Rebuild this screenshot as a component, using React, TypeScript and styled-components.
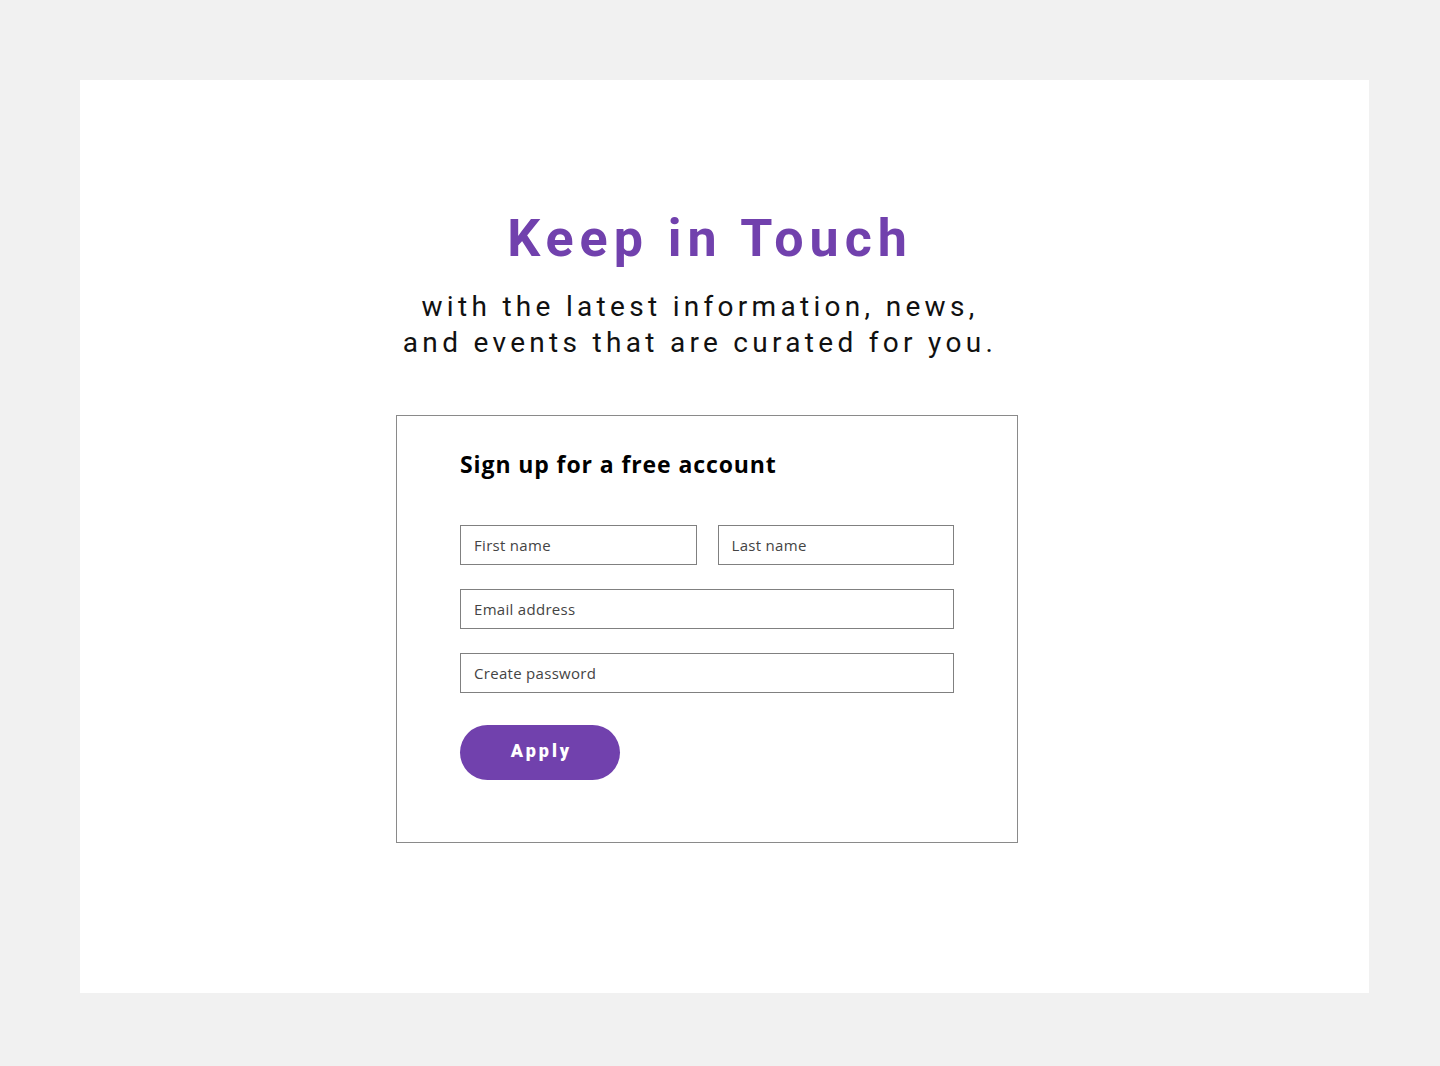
import styled, { createGlobalStyle } from "styled-components";

const GlobalStyle = createGlobalStyle`
  body {
    margin: 0;
    background: #f1f1f1;
  }
`;

const fields = {
  names: ["First name", "Last name"],
  rows: ["Email address", "Create password"],
};

const App = () => {
  return (
    <>
      <GlobalStyle />
      <Card>
        <Column>
          <Heading>Keep in Touch</Heading>
          <Subtitle>
            with the latest information, news,
            <br />
            and events that are curated for you.
          </Subtitle>
          <FormBox>
            <FormTitle>Sign up for a free account</FormTitle>
            <NameRow>
              {fields.names.map((name) => (
                <Field key={name} placeholder={name} />
              ))}
            </NameRow>
            {fields.rows.map((name) => (
              <Field key={name} placeholder={name} $spaced />
            ))}
            <ApplyButton type="button">Apply</ApplyButton>
          </FormBox>
        </Column>
      </Card>
    </>
  );
};

export default App;

const Card = styled.div`
  width: 1289px;
  height: 913px;
  margin: 80px 0 0 80px;
  background: #ffffff;
  box-sizing: border-box;
  padding: 133px 0 0 316px;
`;

const Column = styled.div`
  width: 622px;
  display: flex;
  flex-direction: column;
  align-items: center;
`;

const Heading = styled.h1`
  margin: 0 0 0 6px;
  font-family: Roboto, "Liberation Sans", sans-serif;
  font-weight: 700;
  font-size: 52px;
  line-height: 52px;
  letter-spacing: 6px;
  color: #7141ad;
`;

const Subtitle = styled.p`
  margin: 24px 0 0;
  width: 700px;
  padding-right: 14px;
  text-align: center;
  font-family: Roboto, "Liberation Sans", sans-serif;
  font-weight: 400;
  font-size: 28px;
  line-height: 36px;
  letter-spacing: 4.3px;
  color: #111111;
`;

const FormBox = styled.form`
  margin-top: 54px;
  width: 622px;
  height: 428px;
  box-sizing: border-box;
  border: 1px solid #8a8a8a;
  padding: 33px 63px 0;
  display: flex;
  flex-direction: column;
  align-items: flex-start;
`;

const FormTitle = styled.h2`
  margin: 0 0 46px;
  font-family: "Open Sans", "Liberation Sans", sans-serif;
  font-weight: 700;
  font-size: 23px;
  line-height: 30px;
  letter-spacing: 0.9px;
  color: #000000;
`;

const NameRow = styled.div`
  width: 100%;
  display: grid;
  grid-template-columns: 1fr 1fr;
  gap: 21px;
`;

const Field = styled.input<{ $spaced?: boolean }>`
  width: 100%;
  height: 40px;
  box-sizing: border-box;
  margin: ${(p) => (p.$spaced ? "24px 0 0" : "0")};
  padding: 0 13px;
  border: 1px solid #808080;
  border-radius: 0;
  outline: none;
  font-family: "Open Sans", "Liberation Sans", sans-serif;
  font-size: 15px;
  letter-spacing: 0.3px;
  color: #333333;

  &::placeholder {
    color: #444444;
  }
`;

const ApplyButton = styled.button`
  margin-top: 32px;
  width: 160px;
  height: 55px;
  padding: 0 0 4px 3px;
  border: none;
  border-radius: 28px;
  background: #7141ad;
  color: #ffffff;
  font-family: Roboto, "Liberation Sans", sans-serif;
  font-weight: 900;
  font-size: 18px;
  letter-spacing: 3px;
  cursor: pointer;
`;
